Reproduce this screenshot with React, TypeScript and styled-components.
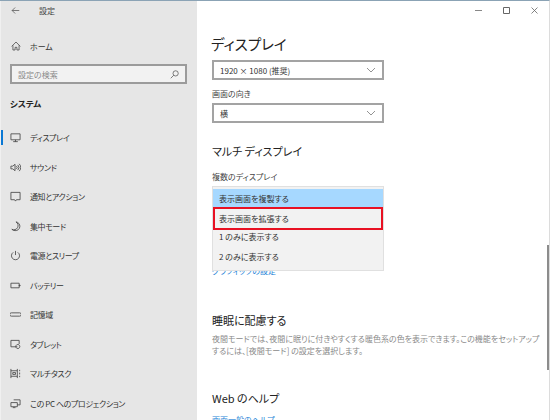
import styled, { createGlobalStyle } from "styled-components";
import type { ReactNode } from "react";

const Global = createGlobalStyle`
  html, body {
    margin: 0;
    padding: 0;
    background: #fff;
  }
  * {
    box-sizing: border-box;
  }
`;

const Window = styled.div`
  width: 550px;
  height: 420px;
  overflow: hidden;
  display: flex;
  border-top: 1px solid #8ba3b5;
  border-right: 1px solid #dcdcdc;
  font-family: "Noto Sans CJK JP", "Noto Sans", sans-serif;
  font-feature-settings: "palt";
  color: #333;
  font-size: 8px;
  line-height: 13px;
`;

const Sidebar = styled.aside`
  width: 197px;
  flex-shrink: 0;
  height: 419px;
  background: #e6e6e6;
  overflow: hidden;
  border-left: 1px solid #f0f0f0;
`;

const TopBar = styled.div`
  height: 19px;
  display: flex;
  align-items: center;
  padding-left: 10px;
  gap: 19px;
  color: #444;
`;

const HomeRow = styled.div`
  margin-top: 18px;
  height: 16px;
  display: flex;
  align-items: center;
  padding-left: 10px;
  gap: 9px;
`;

const SearchBox = styled.div`
  margin: 10px 0 0 9px;
  width: 177px;
  height: 20px;
  border: 2px solid #9b9b9b;
  background: #f2f2f2;
  display: flex;
  align-items: center;
  justify-content: space-between;
  padding: 0 6px;
  color: #8a8a8a;
`;

const SectionLabel = styled.div`
  margin: 12px 0 0 9px;
  height: 14px;
  line-height: 14px;
  font-weight: 700;
  font-size: 8.5px;
  color: #222;
`;

const NavList = styled.nav`
  margin-top: 13px;
  display: flex;
  flex-direction: column;
  letter-spacing: -0.4px;
`;

const NavRow = styled.div<{ $active?: boolean }>`
  position: relative;
  height: 29.5px;
  display: flex;
  align-items: center;
  padding-left: 9px;
  gap: 9px;
  &::before {
    content: "";
    display: ${(p) => (p.$active ? "block" : "none")};
    position: absolute;
    left: 0;
    top: 7px;
    width: 2px;
    height: 15px;
    background: #0a78d4;
  }
`;

const Main = styled.main`
  flex: 1;
  position: relative;
  padding: 0 0 0 15px;
  background: #fff;
  min-width: 0;
`;

const WindowButtons = styled.div`
  position: absolute;
  top: 6px;
  right: 11px;
  display: flex;
  gap: 21px;
  align-items: center;
`;

const Heading = styled.h1`
  margin: 31px 0 0 -1px;
  font-size: 14.5px;
  line-height: 24px;
  font-weight: 400;
  color: #222;
`;

const Select = styled.div<{ $top: number }>`
  margin-top: ${(p) => p.$top}px;
  width: 172px;
  height: 20px;
  border: 2px solid #a3a3a3;
  display: flex;
  align-items: center;
  justify-content: space-between;
  padding: 0 6px;
  color: #333;
`;

const FieldLabel = styled.div<{ $top: number }>`
  margin-top: ${(p) => p.$top}px;
  height: 13px;
  color: #444;
`;

const SubHeading = styled.h2<{ $top: number }>`
  margin: ${(p) => p.$top}px 0 0 0;
  font-size: 11px;
  line-height: 18px;
  font-weight: 400;
  color: #222;
`;

const LinkText = styled.div<{ $top: number }>`
  margin-top: ${(p) => p.$top}px;
  height: 14px;
  color: #2a86d8;
`;

const Dropdown = styled.div`
  position: absolute;
  left: 15px;
  top: 185px;
  width: 172px;
  height: 85px;
  background: #f2f2f2;
  border: 1px solid #e0e0e0;
  padding-top: 2px;
`;

const Option = styled.div<{ $selected?: boolean }>`
  height: ${(p) => (p.$selected ? "18px" : "19.5px")};
  display: flex;
  align-items: center;
  padding-left: 6px;
  background: ${(p) => (p.$selected ? "#a6d8ff" : "transparent")};
  color: #333;
`;

const MarkedOption = styled.div`
  position: relative;
  height: 23px;
  margin-bottom: -3px;
  display: flex;
  align-items: center;
  padding: 0 0 1px 4px;
  border: 2px solid #e81123;
  color: #333;
`;

const Description = styled.p`
  margin: 4px 0 0 0;
  font-size: 8px;
  line-height: 12px;
  color: #8a8a8a;
`;

const ScrollThumb = styled.div`
  position: absolute;
  right: 0;
  top: 244px;
  width: 2px;
  height: 125px;
  background: #8c8c8c;
`;

const Icon = ({ children, size = 11 }: { children: ReactNode; size?: number }) => (
  <svg
    width={size}
    height={size}
    viewBox="0 0 12 12"
    fill="none"
    stroke="#444"
    strokeWidth="0.9"
    style={{ flexShrink: 0 }}
  >
    {children}
  </svg>
);

const navItems: { label: string; icon: ReactNode; active?: boolean }[] = [
  {
    label: "ディスプレイ",
    active: true,
    icon: <path d="M1 2h10v6.5H1zM6 8.5v2M3.5 10.5h5" />,
  },
  {
    label: "サウンド",
    icon: (
      <path d="M1 4.5h2L5.5 2.5v7L3 7.5H1zM7 4.5a2 2 0 0 1 0 3M8.5 3.2a4 4 0 0 1 0 5.6M10 2a5.5 5.5 0 0 1 0 8" />
    ),
  },
  {
    label: "通知とアクション",
    icon: <path d="M1 1.5h10v8H7l-1 1.5-1-1.5H1z" />,
  },
  {
    label: "集中モード",
    icon: <path d="M6.5 1a4.5 4.5 0 0 1-4.5 8 4.5 4.5 0 0 0 3.5 1.5A4.7 4.7 0 0 0 6.5 1z" />,
  },
  {
    label: "電源とスリープ",
    icon: <path d="M6 1v4.5M3.5 2.6a4.4 4.4 0 1 0 5 0" />,
  },
  {
    label: "バッテリー",
    icon: <path d="M1 3.5h9v5H1zM10 5.5h1v1h-1z" />,
  },
  {
    label: "記憶域",
    icon: <path d="M1.5 4.2h9a1.5 1.5 0 0 1 0 3.6h-9a1.5 1.5 0 0 1 0-3.6z" />,
  },
  {
    label: "タブレット",
    icon: <path d="M8 8.5H1v-7h9v4M8.5 6a2.2 2.2 0 1 0 .01 0z" />,
  },
  {
    label: "マルチタスク",
    icon: <path d="M1 1v10M8 1v10M1 3h7M1 9h7M3 5h3v2H3zM10.5 2v1.5M10.5 5v2M10.5 8.5V10" />,
  },
  {
    label: "この PC へのプロジェクション",
    icon: <path d="M4 2h7v5.5H8M1 5h7v4.5H1zM3 10.5h3" />,
  },
];

const Chevron = () => (
  <svg width="10" height="6" viewBox="0 0 10 6" fill="none" stroke="#777" strokeWidth="0.8">
    <path d="M1 1l4 4 4-4" />
  </svg>
);

const App = () => {
  return (
    <Window>
      <Global />
      <Sidebar>
        <TopBar>
          <Icon size={9}>
            <path d="M11 6H1.5M5.5 2L1.5 6l4 4" />
          </Icon>
          <span>設定</span>
        </TopBar>
        <HomeRow>
          <Icon size={10}>
            <path d="M.8 6.5L6 1.2l5.2 5.3M2.3 5.2v5.6h2.6V7.6h2.2v3.2h2.6V5.2" />
          </Icon>
          <span>ホーム</span>
        </HomeRow>
        <SearchBox>
          <span>設定の検索</span>
          <Icon size={9}>
            <circle cx="7.5" cy="4.5" r="3.5" />
            <path d="M5 7L1 11" />
          </Icon>
        </SearchBox>
        <SectionLabel>システム</SectionLabel>
        <NavList>
          {navItems.map((item) => (
            <NavRow key={item.label} $active={item.active}>
              <Icon>{item.icon}</Icon>
              <span>{item.label}</span>
            </NavRow>
          ))}
        </NavList>
      </Sidebar>
      <Main>
        <WindowButtons>
          <svg width="7" height="7" viewBox="0 0 7 7" stroke="#888" strokeWidth="1">
            <path d="M0 3.5h7" />
          </svg>
          <svg width="7" height="7" viewBox="0 0 7 7" fill="none" stroke="#666" strokeWidth="1">
            <path d="M.5.5h6v6h-6z" />
          </svg>
          <svg width="7" height="7" viewBox="0 0 7 7" stroke="#666" strokeWidth="0.8">
            <path d="M.5.5l6 6M6.5.5l-6 6" />
          </svg>
        </WindowButtons>
        <Heading>ディスプレイ</Heading>
        <Select $top={4}>
          <span>1920 × 1080 (推奨)</span>
          <Chevron />
        </Select>
        <FieldLabel $top={7}>画面の向き</FieldLabel>
        <Select $top={3}>
          <span>横</span>
          <Chevron />
        </Select>
        <SubHeading $top={19}>マルチ ディスプレイ</SubHeading>
        <FieldLabel $top={10}>複数のディスプレイ</FieldLabel>
        <LinkText $top={81}>グラフィックの設定</LinkText>
        <Dropdown>
          <Option $selected>表示画面を複製する</Option>
          <MarkedOption>表示画面を拡張する</MarkedOption>
          <Option>1 のみに表示する</Option>
          <Option>2 のみに表示する</Option>
        </Dropdown>
        <SubHeading $top={33}>睡眠に配慮する</SubHeading>
        <Description>
          夜間モードでは、夜間に眠りに付きやすくする暖色系の色を表示できます。この機能をセットアップ
          <br />
          するには、[夜間モード] の設定を選択します。
        </Description>
        <SubHeading $top={32}>Web のヘルプ</SubHeading>
        <LinkText $top={6}>画面一般のヘルプ</LinkText>
        <ScrollThumb />
      </Main>
    </Window>
  );
};

export default App;
